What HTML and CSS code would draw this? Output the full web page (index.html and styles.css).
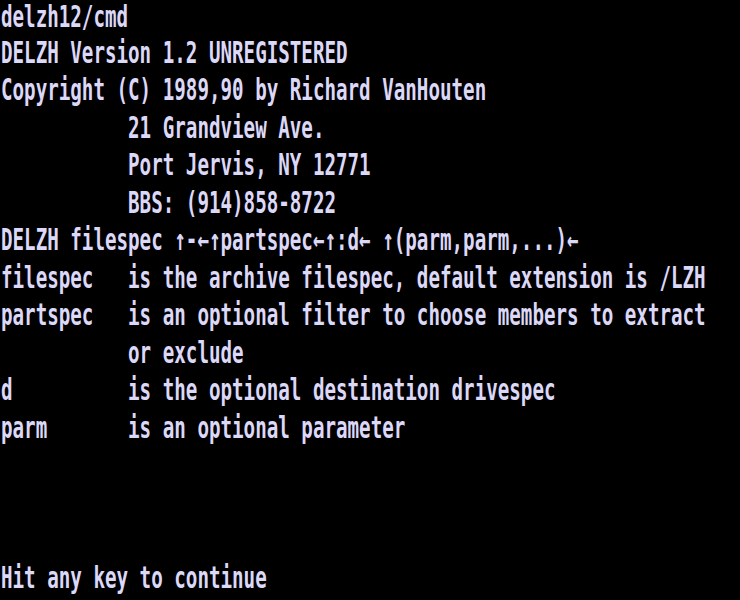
FILE: index.html
```html
<!DOCTYPE html>
<html>
<head>
<meta charset="utf-8">
<link rel="stylesheet" href="styles.css">
</head>
<body>
<div class="screen">
  <div class="row first">delzh12/cmd</div>
  <div class="row">DELZH Version 1.2 UNREGISTERED</div>
  <div class="row">Copyright (C) 1989,90 by Richard VanHouten</div>
  <div class="row">           21 Grandview Ave.</div>
  <div class="row">           Port Jervis, NY 12771</div>
  <div class="row">           BBS: (914)858-8722</div>
  <div class="row">DELZH filespec ↑-←↑partspec←↑:d← ↑(parm,parm,...)←</div>
  <div class="row">filespec   is the archive filespec, default extension is /LZH</div>
  <div class="row">partspec   is an optional filter to choose members to extract</div>
  <div class="row">           or exclude</div>
  <div class="row">d          is the optional destination drivespec</div>
  <div class="row">parm       is an optional parameter</div>
  <div class="row"></div>
  <div class="row"></div>
  <div class="row"></div>
  <div class="row">Hit any key to continue</div>
</div>
</body>
</html>
```
FILE: styles.css
```css
html, body {
  margin: 0;
  padding: 0;
  background: #000;
  width: 740px;
  height: 600px;
  overflow: hidden;
}
.screen {
  width: 740px;
  height: 384px;
  transform: scaleY(1.5625);
  transform-origin: 0 0;
  font-family: "DejaVu Sans Mono", monospace;
  font-weight: bold;
  font-size: 19.2px;
  color: #dcd8f8;
  padding: 1.7px 0 0 1px;
  box-sizing: border-box;
}
.row {
  height: 24px;
  line-height: 16px;
  white-space: pre;
  box-sizing: border-box;
}
.row.first {
  padding-top: 1.6px;
}
```
